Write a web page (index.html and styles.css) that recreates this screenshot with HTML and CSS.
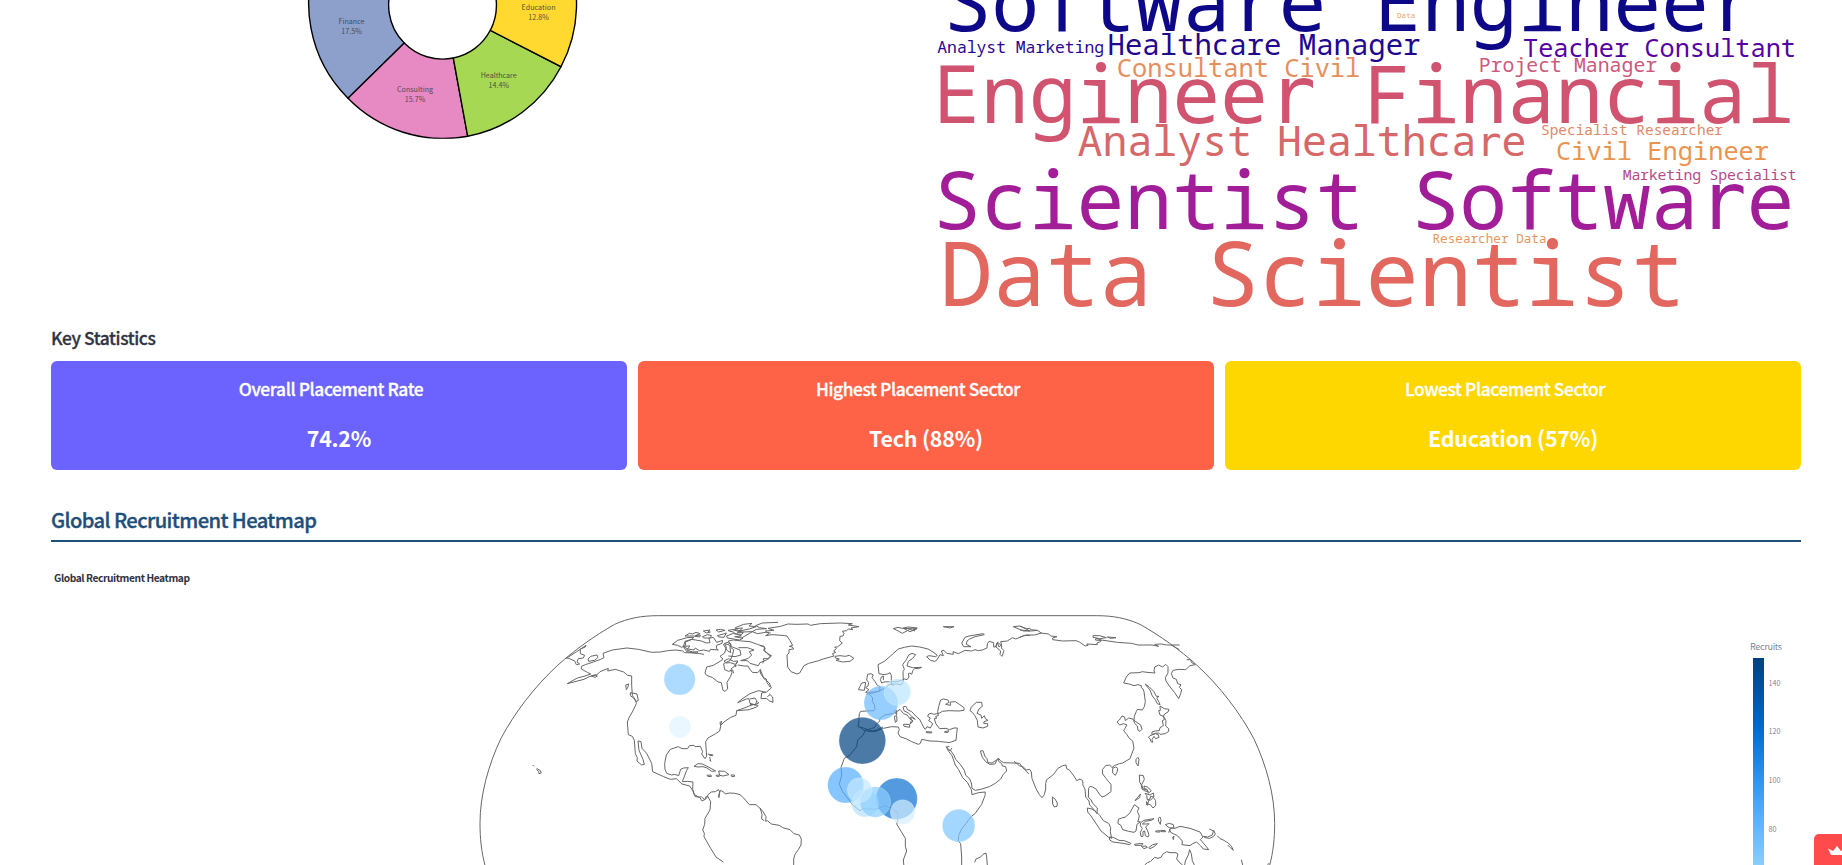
FILE: index.html
```html
<!DOCTYPE html>
<html lang="en">
<head>
<meta charset="utf-8">
<title>Recruitment Dashboard</title>
<link rel="stylesheet" href="styles.css">
</head>
<body>
<main class="page">
  <section class="charts">
    <svg class="donut" viewBox="51 0 865 323" role="img" aria-label="Placement by sector">
      <defs><clipPath id="plot"><rect x="300" y="-10" width="290" height="148.8"/></clipPath></defs>
      <g class="slices" clip-path="url(#plot)">
        <path fill="#8da0cb" d="M348 98.3A133.4 133.4 0 0 1 320 -50L395 -20A53.4 53.4 0 0 0 404.3 43Z"/>
        <path fill="#e78ac3" d="M467.7 136.3A133.4 133.4 0 0 1 348 98.3L404.3 43A53.4 53.4 0 0 0 453.3 58Z"/>
        <path fill="#a6d854" d="M561 66.7A133.4 133.4 0 0 1 467.7 136.3L453.3 58A53.4 53.4 0 0 0 490.3 30.3Z"/>
        <path fill="#ffd92f" d="M565 -50A133.4 133.4 0 0 1 561 66.7L490.3 30.3A53.4 53.4 0 0 0 490 -20Z"/>
      </g>
      <g class="slice-text">
        <text x="351.5" y="24" textLength="26">Finance</text><text x="351.5" y="34" textLength="20.5">17.5%</text>
        <text x="415" y="92" textLength="36">Consulting</text><text x="415" y="102" textLength="20.5">15.7%</text>
        <text x="498.7" y="78" textLength="36">Healthcare</text><text x="498.7" y="88" textLength="20.5">14.4%</text>
        <text x="538.5" y="10" textLength="34">Education</text><text x="538.5" y="20" textLength="20.5">12.8%</text>
      </g>
    </svg>
    <svg class="cloud" viewBox="926 0 875 323" role="img" aria-label="Job title word cloud">
      <text x="943.5" y="31" font-size="79.8" textLength="813.5" fill="#0d0887">Softwa<tspan class="plain">r</tspan>e Enginee<tspan class="plain">r</tspan></text>
      <text x="1397" y="17.7" font-size="7.5" textLength="18.2" fill="#f0a468">Data</text>
      <text x="937.3" y="52.7" font-size="16.4" textLength="166.8" fill="#2a0593">Analyst Marketing</text>
      <text x="1107.5" y="54.7" font-size="29" textLength="313" fill="#220690">Healthcare Manager</text>
      <text x="1523" y="56.7" font-size="25.3" textLength="273" fill="#5601a4">Teacher Consultant</text>
      <text x="1116.8" y="76.7" font-size="25.4" textLength="243.5" fill="#e58f61">Consultant Civil</text>
      <text x="1478.7" y="72" font-size="19.8" textLength="178.5" fill="#cc5a7b">Project Manager</text>
      <text x="933" y="123" font-size="79.8" textLength="861.5" fill="#d0536f">Enginee<tspan class="plain">r</tspan> Financial</text>
      <text x="1077.5" y="156.3" font-size="41.5" textLength="449" fill="#d6686a">Analyst Healthca<tspan class="plain">r</tspan>e</text>
      <text x="1541" y="134.7" font-size="14.4" textLength="182" fill="#e08868">Specialist Researcher</text>
      <text x="1556" y="160" font-size="25.3" textLength="213" fill="#eb9450">Civil Engineer</text>
      <text x="1622.7" y="180" font-size="14.8" textLength="174" fill="#b54a87">Marketing Specialist</text>
      <text x="933" y="229.3" font-size="79.8" textLength="861.5" fill="#a21d98">Scientist Softwa<tspan class="plain">r</tspan>e</text>
      <text x="1432.5" y="242.7" font-size="12.6" textLength="114" fill="#e3975c">Researcher Data</text>
      <text x="939.5" y="306" font-size="88.7" textLength="745.5" fill="#e1675f">Data Scientist</text>
    </svg>
  </section>

  <h3 class="subhead">Key Statistics</h3>
  <section class="stats">
    <article class="stat violet"><h3>Overall Placement Rate</h3><p>74.2%</p></article>
    <article class="stat coral"><h3>Highest Placement Sector</h3><p>Tech (88%)</p></article>
    <article class="stat gold"><h3>Lowest Placement Sector</h3><p>Education (57%)</p></article>
  </section>

  <h2 class="heading">Global Recruitment Heatmap</h2>
  <svg class="map" viewBox="51 542 1750 323" role="img" aria-label="World map of recruits">
    <defs>
      <linearGradient id="scale" gradientUnits="userSpaceOnUse" x1="0" y1="659" x2="0" y2="958">
        <stop offset="0" stop-color="#004280"/><stop offset=".111" stop-color="#0054a3"/><stop offset=".222" stop-color="#0068c9"/><stop offset=".333" stop-color="#1c83e1"/><stop offset=".444" stop-color="#3d9df3"/><stop offset=".556" stop-color="#60b4ff"/><stop offset=".667" stop-color="#83c9ff"/><stop offset=".778" stop-color="#a6dcff"/><stop offset=".889" stop-color="#c7ebff"/><stop offset="1" stop-color="#e4f5ff"/>
      </linearGradient>
    </defs>
    <text class="map-title" x="54" y="582" textLength="136">Global Recruitment Heatmap</text>
    <!-- Americas -->
    <g class="coast" transform="translate(470 605) scale(.33333)">
      <path d="M46 785C34 740 30 700 30 655C30 570 55 480 93 400C133 325 193 245 264 180C314 135 374 92 434 58C474 40 514 32 565 32H1879C1930 32 1970 40 2010 58C2070 92 2130 135 2180 180C2251 245 2311 325 2351 400C2389 480 2414 570 2414 655C2414 700 2410 740 2398 785"/>
      <path d="M292 236l30-17 20-5 20-7-10-5-18-10 0-8 12-5 24-8 22-8 10-5-3-13 28-10 44-6 34 4 40 9 26-1 22-4 25-2 20 3 6 5 34 1 24 4M292 236l50-13 18-9 20-4 10-10 25-10-2 8 23-5 25 8 12 10 12 2 0 28 2 30 10 15 2 10-12 25-9 15-6 15 3 38 12 5 6 12 3 40 6 12-1 10 14 12 8-2-4-15-12-27-3-28 9 2 3 20 14 15 15 30 3 25 33 15 20 8 18-2 17 16 23 6 10 15 3 10 18 10 6 10 8-4 4-9 6 0 8 15-2 25-15 25-1 18-6 17 5 10-1 10 20 35 16 26 22 15M289 160l11-7 20-13 8-5 20-14-2 5-15 6 0 14 13 5-4 8-15 2-4 10 8 6-10 2-5-11-20-9zM354 162l8-8 19-4 3 7-10 9-18 3zM364 213l12-4 6 4-7 4zM467 240l9-3-2 9-5 8zM481 263l20 4 4 19-7 4-7-11-10-7z"/>
      <path d="M705 204l5-18 20-5 20-12 9-7-9-8 14-10 5-18-5-10 14 4 5 8 8 6-3 14-7 18-20 10 3 18 12 5 12-4 3 10M803 180l19 3 12 0 5 9 8 10 16 1 8-8 0 9 9 14 9 4 2 11 9 13M705 204l5 7 18 7 16 13 10 2 5 23 6 3 8-7-2-20 11-18 4-12-3-10 10-8 10-13M888 262l-22-5-26 9-24 16-13 11 26-11 8-1 3 14 17 5 3-13-5-8-15 3M892 275l8-6M800 317l28-10 9-4 13-4 14 2-2 4-24 9-10 1zM840 298l15 1 12-6-5-3M800 317l-2 14-16 6-20 14-10 10 3-12-5 3 2 12-3 14-12 8-23 13-7 11 1 17 2 26-5 8-10-14 3-7-7-16-16 1-3-4-14 1-5 9-17 0-11-6-24 8-12 17-5 25 1 18 5 12 15 5 9-2 12 4 6-19 9-4 14-1-5 8-13 34 16-1 16 2-1 22 7 21 11 3 8-2 10 9 8-7 2-8 10-8 12-1 10-6 3 7-4 14 2 3 2-15 3-7 10 6 4 5 13-3 16 1 15 4 11 10 17 20 20 0 13 12 5 17-1 14 8 5M672 484l12-8 13 1 20 10 20 11-12 1-14-10-12-4-15 1zM746 498l18 1 13 10-18 4-10-2zM711 511l12-1 1 5-11-1zM738 511l8-1 2 4-8 0zM783 510l10 0 1 4-9 1zM713 447l16 3-1 2-10-1M719 456l3 13-3-3M188 480l4 4M200 490l11 7 3 7-7 2-1-7-7-6"/>
      <path d="M607 118l16-12 28-8 20-1-5 6-20 8 1 10-12 6-12-6zM640 125l5-16 20-6 29 5 15 6 11-1-3-13 13-3 10 15 18-6-2 9-16 6-1 9 6 5-24-2-2 6-18-4-13 2-12-8-4 6-18-3zM640 124l20-1-10 12 18 6 16-1-4 5-30-5zM645 93l13-8 10 2 10-5 12 4-14 6 15-2-2 6-20-3zM700 78l20-3-6 6 7 0-12 3zM697 95l16-6 12 3-6 7-18 0zM738 75l13-2 14 3-19 5zM742 92l18-5 9-3-7 13-15-1zM774 76l20-3 20 5-12 4 18 0-4 6-22-1-3-6-12-2zM770 93l20-8 14 3 10 5-20 2 25 5-11 5-36-6zM796 68l25-10 25-3-9 8 21 2-20 7-30 6 10-9-22 2zM790 75l25 6 32-1 15 6 25-4 15 2M815 99l44-26 31-2-21-3-12-6 20-8 47-2M760 118l11-6 12 5-3 11 2 15-10-6zM775 108L785 125 810 135 813 150 795 155 775 153M805 128L832 128 852 135 838 140 845 150 835 160 812 167 832 167 840 175 865 182 870 173 890 165 903 152 885 140 882 125 862 118 840 110 815 108 790 105 775 108M762 168l14-7 14 8 14-1-8 10-15-5-12 1zM794 184l4-4 0 4z"/>
    </g>
    <!-- Europe, Africa and the Middle East -->
    <g class="coast" transform="translate(760 605) scale(.33333)">
      <path d="M17 92l10-6-11-8 26-2-18-6 38-6 22-7 24 1 36-1 7 4 30-5 60-2 36 2-12 4 32 5-24 4 6 5-14-2-5 5-13 2 5 6-3 8-9 1-1 13 8 7-15 12-8 0 5 5-8 7 6 4-10 4 5 7-36 10-10 4-30 8-14 7-13 22-8 3-18-7-10-14-2-36 6-6 0-10 14-2-4-6-9-2 10-3-8-14-9-14-15-2-30-2zM225 154l15-2 16 2 12-3 14 9-12 9-22 2-20-5 10-4-12-3z"/>
      <path d="M0 122l12 2 4 7-6 4 11 8 5 7 8 2-7 9-17 0 2 6-4 8M0 192l12 29 16 13 6 15-14 12-15 3-2 17 16-1 10 8 10 4-1-16-10-9M400 71l14-4 12 3 18-4 28 3-12 4 5 5-16-5-22 12-16-9zM430 70l40 2-20 8zM550 65l32 0-12 4zM760 65l20-2 30 15-20 0z"/>
      <path d="M810 91l-18 1-25 10-10-4-15 10-20 2 3 10-8 6-5-14-6 14-5 0 0-13-14-4-5 8-1 12-14 6-12 2-10-3-10 4-20-2-20 10-16-6 1 8-20-3-8-9-8 2 6 14-10-3-10 17-6 3-13-3-11-11 7-3 20 3 5-4-13-10-15-9-25-6-24-3-22 4-18 5-28 25-14 12-19 10 3 27 15 3 10-2 8-4 4 9 0 22 4 7 9-5 16 4 7-10-1-30 4-7-5-14 11-15 7-14 10-5 11 4-10 12-12 8-4 14 17 5 27-1-10 4-10-1-6 6-4 12-5-4-5 2 2 10-6 8-8-2-10 5-15 3-16 0-20 1-7 3-4-10 4-9 5-2 0 12M605 114l10-17 12-4 42-7 4 3-28 6-16 7-8 6-2 10 14 7-22 0zM713 112l7 6 6 5-2 6 8 8-6 17-6-6 2-10-14-12z"/>
      <path d="M323 208l10-2 7 4-4 7 4 6 6 8 6 10 8 4-1 13-14 3-28 1 10-8-10-6 7-5 2-11-6-7zM300 244l-5 10 18 2 4-24-12 2zM318 268l24-5 18-6 16-8 10-9 15-4M328 268l10 10-1 12 6 9 2 14-3 4-40 2-4 7-2 28-2 11 16 4 13 5 12-4 8-2 6-10 10-10 0-7 14-11 14-2 14-3 12-7 7-5 11 13 10 4 13 16-3 11 8-9-9-10 8 1 8 4-12-10-8-8-14-8-3-11 9-2 2 4 2 6 13 6 14 15 10 8 6 12 7 14 4 4 5-8 10 4 7-12-6-7-6-3 5-8-8-5 3-7 8-2 8 3 17-4 8-5 20-2 30 1 15-2 0-8-14-10-12-8-15 1 0 10-14-3 10-6-3-7-14-3-8 3-6 20-3 15 2 12-8 2 3 6-7 0 4 15 8 11 4 5 19-1 10 4 14-5 10 0-2 17-2 20L567 413 560 412 535 409 510 408 485 403 481 415 475 418 455 410 440 402 420 395 414 384 418 374 415 366 395 365 370 370 345 380 318 373 308 392 293 405 290 425 268 452 253 460 243 487 245 510 238 538 248 560 262 578 278 600 300 617 308 612 330 612 345 613 375 603 394 609 403 617 412 620 414 645 410 657 424 680 436 700 436 724 440 738 430 765 432 785M300 366l12 10 20 4 18-5 19-9M430 358l19 0 0 9-17-3zM403 334l7-2 1 16-5 4zM403 318l7-2 0 13zM498 380l18 1-2 3-15-1zM553 381l13-4-3 6z"/>
      <path d="M634 306l15-14 16 0 2 12-10 8-6 13 12 5 2 10 8-8 3 9 8 5-12 4-1 5 12 1 0 8-14 5-15-3-2-20-8-15-7-9-7-5zM568 424l-8 2 10 12 6-9M558 424l8 15 10 13 10 28 10 14 12 24 14 14 12 22 2 15 20-6 20-2-1 11-10 26-20 28-13 10-14 20-12 14-10 21-1 17 7 8 3 40 0 28M570 434l12 17 5 12 14 15 12 18 4 15 12 10 6 16 1 13 10 6 16-3 26-8 18-10 16-13 8-14 10-10-3-13-10-2-2-7-10-8 0-7-5 4-14 9-12-1-3-12-6-7-6-17-8 1 6 19 10 13 12 8 16-1 6-13 5-4 5 7 10 6 48 2 10 14 12 11 5 7M644 772l4-10 14-6 7-8 9-4 2 12 2 24M0 609l10 12 8 14-1 14 5-2 12 10 24 4 10 7 22 6 12 12 16 4 6 12-1 18-8 14-10 14-4 14 0 18"/>
    </g>
    <!-- Asia and Oceania -->
    <g class="coast" transform="translate(1020 605) scale(.33333)">
      <path d="M0 64l20 7 10-1 2 4 20 2 12 8-20 6-26 0-18 6M0 75l34 3 18-2M62 84l24 3 6 6 19 2-13 4 0 5 30 4 40-1 10 4 18 12 8-2-4-4 32 2-1-5 8-3 5-4-18-2 2-5 16 5 20 3 28 4 42 3 20 5 42 0 20 4-12-6 20-1 15 3 26 0 14 0M219 92l20 0 20 6-20 3-20-4zM262 96l26 2-16 2zM454 120l24 14M500 164l12 0 2 8 12 7-16 3-13 12-20-1-18 3-5 10 5 13 10 4 4 13 10 3-5 8 7 7-3 12-6 15-12-18-16-20-10-15-2-10 8-14 0-19-7-7-9 8-12-6-12 6-2 12 3 6-24-2-14-2-10 3-28 1-10 12-8 18 17 3 14 5 12-3 10 3 0 6 5 4 3 8 4 30-3 15-6 10-15-2-3 6-6 15-1 12 20 14 4 13-6 6-6-3-2-13-8-8-4-12-14-4-10 8-2-11-8-3-8 12-7 6 8 9 12-4 10 4-6 10-4 7 9 11 8 12 10 8 4 21-8 21-4 11-22 13-10 2-15 6-7 6-7-8-12 2-10 12 1 13 10 13 8 10 7 8 0 22-18 13-9 3-8-9-10-15-10-6-8-2-4 6-1 27 8 7 5 11 14 14-1 17-8-11-14-15-2-12-10-12-2-24-6-11-1-14-8-5-10 5-8-14-14-18-8-4-2-11-10 2-14 8-14 19-20 15-3 11 0 17-4 17-7 9-8-9-10-18-12-30-2-20-5-8-10 2-8-8-13-5-8-7-8-6"/>
      <path d="M375 237l12 8 14 14 8 15 8 0-7 5 8 14 2 6-8-3-6-12-9-11-7-18zM420 303l13 8 14 2-3 8-10 6-4 7-10-4-4-13 5-1zM430 333l8 14-1 16 9 8 0 8-10 7-16 2-4-4-10 1-10 4 0-8 10-3 12-1 2-9 10-6-3-15 6-3zM390 392l16-6 9 3 2 8-10 4-5-7-6 10 2 8-5-2-3-9-5-4zM348 463l6-6 3 7-3 19-6-10zM278 490l9-4 6 4-1 9-6 12-8-7zM97 576l8 6 7 12-1 10-8 2-5-9zM358 510l12 2 3 11-8 16 4 13 10 2 6 6-10-2-9-6-2-12-5-9zM345 587l14-17 2-3-2 11zM372 543l10 3 12 11-9 8-4-12-8-2zM375 565l15 5 10-6 2 12-10-2-2 8-8 3-2-14zM392 585l8-8 7 10 0 15-8 7-8-10-8-2 4-12zM380 590l4 10-4 0zM295 643l10-4 10-2 14-12 14-26 14 10-5 10 6 14-3 12-2 5 8 1-10 7-3 20-6 4-16-3-18-5-6-14-8-4zM202 609l14 3 12 8 12 12 10 15 16 8 6 13-1 12 4 20-10-4-22-18-14-21-16-24-10-12zM268 696l12 1 17 9 16 1 20 8-4 4-20-4-30-4-10-6zM343 718l14-2 12 0-4 5-20 0zM364 724l14-1 4 4-10 4zM386 728l12-9 14-3-10 9-12 6zM362 653l10-7 30-5-8 5-18 3-9 8 12 0 8-1-10 10 6 12 4 12-3 6-8-4-2-14-5 2 0 14-6 0-2-12 6-11-6-9zM415 640l5-4 3 8-2 14-5-9zM407 678l12-1 1 4-12 0zM422 676l14 1 1 3-14 0zM436 659l12-4 12 4 2 9-11 3-5 12 M436 659L447 668 465 670 480 664 510 670 540 681 549 696 541 704 555 720 566 734 550 732 541 722 530 711 518 716 510 722 486 719 487 708 472 692 452 682 448 672M458 696l4-2-2 10zM550 694l13 2 14-6 4-14 5 11-5 7-12 6-15-2zM568 672l12 6M592 692l8 9M600 701l12 5 8 6M620 710l14 13 6 13-9-8-8-8M374 780l8-7 10-4 12-12 10 3 10-4 4-8 12-8 10 3 18 0 6 4-4 15 10 12 8 6M494 780l2-12 9-18 4-16 5 12 3 21 6 13M664 764l4 16M742 778l6-2"/>
    </g>
    <g class="recruits">
      <g transform="translate(470 605) scale(.33333)"><circle cx="629" cy="223" r="47" fill="#8accff"/><circle cx="630" cy="366" r="33" fill="#e1f4ff"/></g>
      <g transform="translate(760 605) scale(.33333)">
        <circle cx="363" cy="294" r="51" fill="#69b9ff"/><circle cx="412" cy="261" r="40" fill="#bce5ff"/>
        <circle cx="307" cy="407" r="70" fill="#004280"/><circle cx="257" cy="540" r="54" fill="#54adff"/>
        <circle cx="410" cy="581" r="62" fill="#0a70d0"/><circle cx="315" cy="595" r="41" fill="#b4e1ff"/>
        <circle cx="346" cy="591" r="46" fill="#8acdff"/><circle cx="299" cy="555" r="37" fill="#c3e8ff"/>
        <circle cx="428" cy="621" r="37" fill="#d3eeff"/><circle cx="596" cy="662" r="49" fill="#7dc6ff"/>
      </g>
    </g>
    <rect x="1753" y="658" width="11" height="207" fill="url(#scale)"/>
    <g class="legend"><text class="legend-title" x="1750" y="650" textLength="32">Recruits</text><text x="1768.5" y="686" textLength="12">140</text><text x="1768.5" y="734.3" textLength="12">120</text><text x="1768.5" y="783" textLength="12">100</text><text x="1768.5" y="832" textLength="8">80</text></g>
  </svg>
</main>
<div class="badge"><svg viewBox="0 0 24 16" width="24" height="16"><path fill="#fff" d="M0 2.500l5 2.500L9 0l4 5 5-2.500L16 9H3z"/></svg></div>
</body>
</html>
```
FILE: styles.css
```css
* { box-sizing: border-box; }
body { margin: 0; background: #fff; color: #31333f; font-family: "Source Sans Pro", "Noto Sans CJK SC", "Open Sans", sans-serif; overflow: hidden; }
h2, h3, p { margin: 0; }
svg { display: block; }
.page { height: 865px; padding: 0 41px 0 51px; overflow: hidden; }
.charts { display: grid; grid-template-columns: 865px 875px; gap: 10px; height: 323px; }
.donut, .cloud { width: 100%; height: 323px; }
.slices path { stroke: #000; stroke-width: 1.4; }
.slice-text { font-size: 7.1px; fill: #444; text-anchor: middle; opacity: .9; }
.cloud { font-family: "Droid Sans Mono", "Noto Sans Mono", "DejaVu Sans Mono", monospace; }
.plain { font-family: "DejaVu Sans Mono", monospace; }
.subhead { font-size: 17.4px; line-height: 29px; font-weight: 500; letter-spacing: -.4px; -webkit-text-stroke: .3px; margin-bottom: 9px; }
.stats { display: grid; grid-template-columns: repeat(3, 1fr); gap: 11px; }
.stat { height: 109px; padding-top: 16px; border-radius: 6px; color: #fff; text-align: center; }
.stat h3 { font-size: 17.4px; line-height: 24px; font-weight: 500; letter-spacing: -.4px; -webkit-text-stroke: .3px; padding-right: 16px; }
.stat p { margin-top: 19.6px; font-size: 21.4px; line-height: 34px; font-weight: 700; letter-spacing: -.2px; }
.violet { background: #6c63ff; }
.coral { background: #ff6347; }
.gold { background: #ffd700; }
.heading { margin-top: 34.5px; padding-bottom: 5.5px; border-bottom: 2px solid #1f4e79; color: #1f4e79; font-size: 20.2px; line-height: 30px; font-weight: 500; letter-spacing: -.6px; -webkit-text-stroke: .35px; }
.map { width: 100%; height: 323px; }
.map-title { font-size: 10.2px; font-weight: 700; fill: #31333f; }
.coast path { fill: none; stroke: #666; stroke-width: 3; stroke-linejoin: round; }
.recruits circle { fill-opacity: .7; stroke: #fff; stroke-opacity: .3; stroke-width: 2; }
.legend { font-size: 7.2px; fill: #808495; }
.legend-title { font-size: 9px; }
.badge { position: absolute; right: 0; bottom: 0; width: 28px; height: 31px; padding: 12px 0 0 14px; overflow: hidden; border-radius: 5px 0 0 0; background: #ff4b4b; }
```
